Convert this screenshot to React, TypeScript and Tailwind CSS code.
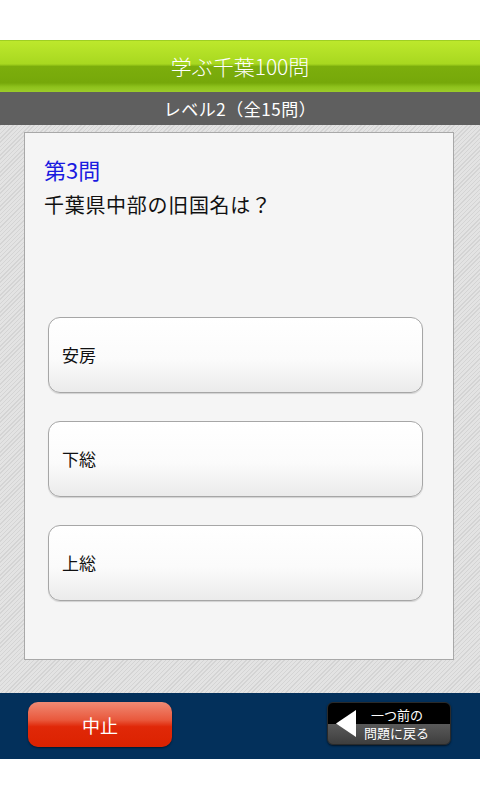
const choices = ["安房", "下総", "上総"];

export default function App() {
  return (
    <div
      className="w-[480px] h-[800px] bg-white flex flex-col"
      style={{ fontFamily: '"Noto Sans CJK JP", "Noto Sans", sans-serif' }}
    >
      {/* status area */}
      <div className="h-[40px] shrink-0 bg-white" />

      {/* title bar */}
      <div className="h-[52px] shrink-0 flex items-center justify-center bg-[linear-gradient(to_bottom,#bde82c_0%,#a8d820_45%,#7cae0c_50%,#76a80a_82%,#8ec21c_90%,#9ccc2a_100%)] border-t border-[#9fcf24]">
        <span className="text-white text-[21px] leading-none font-light">学ぶ千葉100問</span>
      </div>

      {/* level bar */}
      <div className="h-[33px] shrink-0 flex items-center justify-center bg-[#5f5f5f]">
        <span className="text-white text-[17px] leading-none tracking-[0.5px]">レベル2（全15問）</span>
      </div>

      {/* content */}
      <div className="h-[568px] shrink-0 flex flex-col pt-[7px] pl-[24px] pr-[26px] pb-[33px] bg-[repeating-linear-gradient(135deg,#d4d4d4_0px,#d4d4d4_1px,#e3e3e3_1px,#e3e3e3_3px)]">
        <div className="flex-1 flex flex-col bg-[#f5f5f5] border border-[#a8a8a8]">
          <div className="pt-[22px] pl-[19px]">
            <div className="text-[22px] leading-[28px] text-[#1a1ae0]">第3問</div>
            <div className="mt-[8px] text-[20px] leading-[28px] tracking-[0.7px] text-[#111]">千葉県中部の旧国名は？</div>
          </div>

          <div className="mt-[98px] ml-[23px] mr-[30px] flex flex-col gap-[28px]">
            {choices.map((c) => (
              <button
                key={c}
                className="h-[76px] flex items-center pl-[13px] rounded-[12px] border border-[#a6a6a6] bg-[linear-gradient(to_bottom,#ffffff_0%,#fbfbfb_55%,#ebebeb_100%)] shadow-[0_1px_1px_rgba(0,0,0,0.15)] text-left"
              >
                <span className="text-[17px] text-[#111]">{c}</span>
              </button>
            ))}
          </div>
        </div>
      </div>

      {/* bottom bar */}
      <div className="h-[66px] shrink-0 bg-[#03305b] flex items-start justify-between pt-[9px] pl-[28px] pr-[29px]">
        <button className="w-[144px] h-[45px] rounded-[10px] flex items-center justify-center bg-[linear-gradient(to_bottom,#f08a74_0%,#e9583c_40%,#e02808_55%,#dc2200_100%)] shadow-[0_1px_2px_rgba(0,0,0,0.5)]">
          <span className="text-white text-[18px] leading-none">中止</span>
        </button>

        <button className="w-[124px] h-[43px] rounded-[6px] border border-[#2a2a2a] flex items-center bg-[linear-gradient(to_bottom,#000000_0%,#000000_50%,#5a5a5a_51%,#3e3e3e_100%)] shadow-[0_1px_2px_rgba(0,0,0,0.6)] pl-[8px]">
          <svg width="20" height="27" viewBox="0 0 20 27" className="shrink-0">
            <polygon points="20,0 20,27 0,13.5" fill="#ffffff" />
          </svg>
          <div className="ml-[8px] flex flex-col text-white text-[13px] leading-[18px] items-start">
            <span className="pl-[7px]">一つ前の</span>
            <span>問題に戻る</span>
          </div>
        </button>
      </div>

      <div className="flex-1 bg-white" />
    </div>
  );
}
